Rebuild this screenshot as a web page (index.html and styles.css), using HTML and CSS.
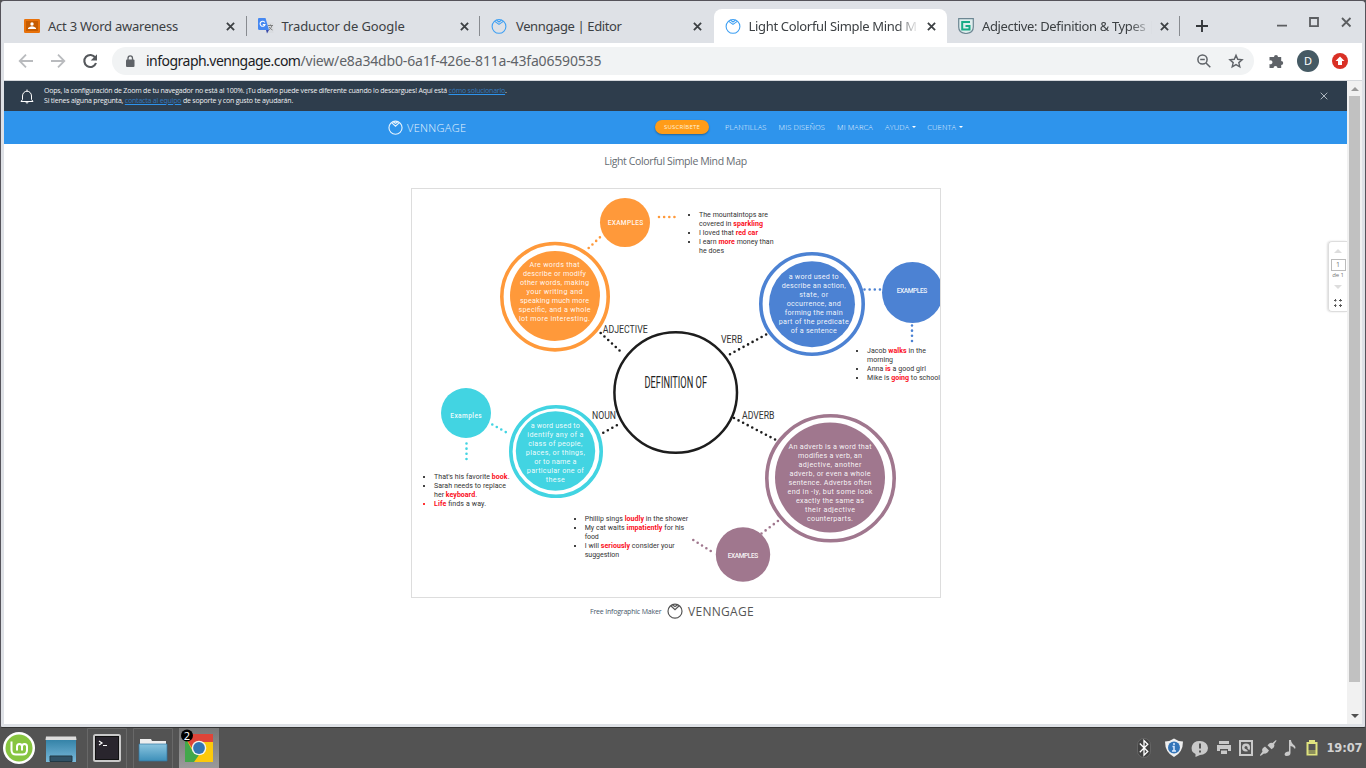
FILE: index.html
```html
<!DOCTYPE html>
<html lang="es">
<head>
<meta charset="utf-8">
<title>Light Colorful Simple Mind Map</title>
<link rel="stylesheet" href="styles.css">
</head>
<body>
<svg width="0" height="0" class="defs">
  <symbol id="x" viewBox="0 0 10 10"><path d="M1 1 9 9M9 1 1 9" stroke="currentColor" stroke-width="2"/></symbol>
  <symbol id="venn" viewBox="0 0 16 16"><g fill="none" stroke="currentColor" stroke-width="1.100"><circle cx="8" cy="8.400" r="6.900"/><path d="M3.400 3.100 8 6.400 12.600 3.100M5.400 2 8 4 10.600 2"/></g></symbol>
  <symbol id="logo" viewBox="0 0 16 16"><g fill="none" stroke="currentColor" stroke-width="1.200"><circle cx="8" cy="8.200" r="7"/><path d="M3.800 2.800 8 6.700 12.200 2.800M5.500 1.900 8 3.500 10.500 1.900"/></g></symbol>
</svg>
<div class="window">
  <header class="tabs">
    <div class="tab"><svg class="fav" viewBox="0 0 16 16"><rect y="1" width="16" height="14" rx="1.3" fill="#e8710a"/><rect x="2" y="3" width="12" height="10" fill="#c65c00"/><circle cx="8" cy="6" r="1.7" fill="#fff"/><path d="M4 11V10q4-3.5 8 0v1z" fill="#fff"/></svg><span class="title t1">Act 3 Word awareness</span><svg class="close"><use href="#x"/></svg></div>
    <div class="tab line"><svg class="fav" viewBox="0 0 16 16"><path d="M6 4.5h9.5V15H9z" fill="#d9dce0"/><path d="M1 0h6.5l3.5 12H1.5Q0 12 0 10.500V1Q0 0 1 0" fill="#4688f1"/><path d="M8 12h3l-2 3.500z" fill="#3749ab"/><path d="M6.800 4.600A2.500 2.500 0 1 0 7 6.500H4.800" fill="none" stroke="#fff" stroke-width="1.100"/><path d="M10 7.500h5M12.500 6.500v1M14 7.500q-.8 3-3.200 4.500M11 9q1.500 2.200 3.500 3" fill="none" stroke="#777" stroke-width=".9"/></svg><span class="title t2">Traductor de Google</span><svg class="close"><use href="#x"/></svg></div>
    <div class="tab line"><svg class="fav blue"><use href="#venn"/></svg><span class="title t3">Venngage | Editor</span><svg class="close"><use href="#x"/></svg></div>
    <div class="tab active"><svg class="fav blue"><use href="#venn"/></svg><span class="title fade t4">Light Colorful Simple Mind M</span><svg class="close"><use href="#x"/></svg></div>
    <div class="tab end"><svg class="fav" viewBox="0 0 16 16"><path d="M.7.700h14.600V9q0 6-7.300 6.500Q.7 15 .7 9z" fill="#dfeeee" stroke="#6d8793" stroke-width="1.200"/><path d="M12 4H4.200v7.500h7.300V8H7.500" fill="none" stroke="#18ab86" stroke-width="2"/></svg><span class="title fade t5">Adjective: Definition &amp; Types |</span><svg class="close"><use href="#x"/></svg></div>
    <svg class="plus" viewBox="0 0 12 12"><path d="M6 0v12M0 6h12" stroke="#34373b" stroke-width="1.900"/></svg>
    <svg class="winbtns" viewBox="1270 10 90 24"><g fill="none" stroke="#5c5e61" stroke-width="1.800"><path d="M1277 25.700h10M1342 18l8.500 8.500M1350.500 18l-8.500 8.500"/><path d="M1310 18h8v8.200h-8z"/></g></svg>
  </header>
  <div class="toolbar">
    <svg class="navicons" viewBox="4 43 108 37"><g fill="none" stroke="#b9bbbe" stroke-width="1.800"><path d="M33 61H20M26 54.700 19.700 61 26 67.300M51 61h13M58 54.700 64.300 61 58 67.300"/><path d="M95.300 57.600A6 6 0 1 0 96 63" stroke="#55585c" stroke-width="2.100"/></g><path d="M97 54.200v6.300h-6.300z" fill="#55585c"/></svg>
    <div class="omnibox">
      <svg class="lock" viewBox="0 0 10 12"><rect x="1" y="4.500" width="8.500" height="7.500" rx="1" fill="#5f6368"/><path d="M3 5V3.200a2.200 2.200 0 0 1 4.500 0V5" fill="none" stroke="#5f6368" stroke-width="1.300"/></svg>
      <span class="host">infograph.venngage.com</span><span class="path">/view/e8a34db0-6a1f-426e-811a-43fa06590535</span>
      <svg class="omniicons" viewBox="1195 50 50 22"><g fill="none" stroke="#5f6368" stroke-width="1.500"><circle cx="1202.500" cy="59.500" r="4.600"/><path d="m1206 63 4.300 4.300M1200.200 59.500h4.600"/><path d="m1236 55.300 1.700 4 4.400.4-3.300 2.900 1 4.300-3.800-2.300-3.800 2.300 1-4.300-3.300-2.900 4.400-.4z" stroke-width="1.400"/></g></svg>
    </div>
    <svg class="exticons" viewBox="1264 43 98 37"><path d="M1270 57h4a2 2 0 1 1 4 0h3.200v4a2 2 0 1 1 0 4V68h-3.700a2 2 0 1 0-4 0H1269.500v-4a2 2 0 1 0 0-3.500V57z" fill="#5f6368"/><circle cx="1308" cy="61" r="11" fill="#455a64"/><text x="1304" y="65" class="avatar">D</text><circle cx="1340" cy="61" r="8" fill="#d93025"/><path d="m1340 56.500 4.500 4.500h-2.500v4h-4v-4h-2.500z" fill="#fff"/></svg>
  </div>
  <div class="viewport">
    <main class="page">
      <div class="notice">
        <svg class="bell" viewBox="0 0 14 16"><path d="M1 12.500h12L11.500 10.500V7a4.500 4.800 0 0 0-9 0v3.500zM5.500 13q1.500 2.500 3 0M7 .500v2" fill="none" stroke="#fff" stroke-width="1"/></svg>
        <div class="message"><div class="m1">Oops, la configuración de Zoom de tu navegador no está al 100%. ¡Tu diseño puede verse diferente cuando lo descargues! Aquí está <a>cómo solucionarlo</a>.</div><div class="m2">Si tienes alguna pregunta, <a>contacta al equipo</a> de soporte y con gusto te ayudarán.</div></div>
        <svg class="dismiss" viewBox="0 0 8 8"><path d="m.7.700 6.600 6.600m0-6.600L.7 7.300" stroke="#aeb7bf" stroke-width="1"/></svg>
      </div>
      <nav class="nav">
        <svg class="brandmark"><use href="#logo"/></svg><span class="brand">VENNGAGE</span>
        <span class="subscribe">SUSCRÍBETE</span>
        <div class="links"><span>PLANTILLAS</span><span>MIS DISEÑOS</span><span>MI MARCA</span><span class="more">AYUDA</span><span class="more">CUENTA</span></div>
      </nav>
      <h1>Light Colorful Simple Mind Map</h1>
      <svg class="map" viewBox="411 188 530 410">
        <rect x="411.500" y="188.500" width="529" height="409" fill="#fff" stroke="#ddd"/>
        <g clip-path="url(#board)">
        <clipPath id="board"><rect x="412" y="189" width="528" height="408"/></clipPath>
        <g class="orange"><ellipse class="ring" cx="555" cy="296.700" rx="53.200" ry="53.200"/><circle class="disc" cx="555" cy="296" r="45"/><ellipse class="disc" cx="625" cy="222.500" rx="25" ry="24.500"/><path class="dots" d="M588.700 248 600.300 237M659 217h16.500"/></g>
        <g class="royal"><ellipse class="ring" cx="812" cy="304" rx="51.200" ry="50.200"/><circle class="disc" cx="812" cy="304.200" r="43"/><circle class="disc" cx="912.500" cy="292.500" r="30.500"/><path class="dots" d="M864.500 289.500H881M912 325.500V342"/></g>
        <g class="teal"><ellipse class="ring" cx="556" cy="451.500" rx="45.200" ry="44.700"/><circle class="disc" cx="555.500" cy="451" r="39.700"/><circle class="disc" cx="466" cy="413" r="25"/><path class="dots" d="M492.300 424.500 507 432.800M466.500 443.500v16.500"/></g>
        <g class="mauve"><ellipse class="ring" cx="830.500" cy="478.300" rx="63.700" ry="62.500"/><circle class="disc" cx="830" cy="477.500" r="55"/><circle class="disc" cx="743" cy="554.500" r="27.200"/><path class="dots" d="M693.300 540 711.500 551.500M761.500 533.500 778 521"/></g>
        <g class="ink"><ellipse class="core" cx="675.700" cy="392.500" rx="61.300" ry="60.300"/><path class="dots" d="M600.700 333 620 351M730 354.300 767 334M603.300 432.700 617.500 424.900M734 418 776 440"/></g>
        <g class="body">
          <g class="mid" transform="translate(554.500 0)"><text y="267" textLength="50">Are words that</text><text y="276" textLength="63">describe or modify</text><text y="285" textLength="69">other words, making</text><text y="294" textLength="56">your writing and</text><text y="303" textLength="69">speaking much more</text><text y="312" textLength="72">specific, and a whole</text><text y="321" textLength="71">lot more interesting.</text></g>
          <g class="mid" transform="translate(813.700 0)"><text y="279" textLength="50">a word used to</text><text y="288" textLength="64">describe an action,</text><text y="297" textLength="29">state, or</text><text y="306" textLength="54">occurrence, and</text><text y="315" textLength="58">forming the main</text><text y="324" textLength="70">part of the predicate</text><text y="333" textLength="46">of a sentence</text></g>
          <g class="mid" transform="translate(555.300 0)"><text y="428.300" textLength="49">a word used to</text><text y="437.300" textLength="56">identify any of a</text><text y="446.300" textLength="54">class of people,</text><text y="455.300" textLength="59">places, or things,</text><text y="464.300" textLength="42">or to name a</text><text y="473.300" textLength="57">particular one of</text><text y="482.300" textLength="19">these</text></g>
          <g class="mid" transform="translate(830 0)"><text y="449" textLength="83">An adverb is a word that</text><text y="458" textLength="64">modifies a verb, an</text><text y="467" textLength="63">adjective, another</text><text y="476" textLength="81">adverb, or even a whole</text><text y="485" textLength="83">sentence. Adverbs often</text><text y="494" textLength="85">end in -ly, but some look</text><text y="503" textLength="68">exactly the same as</text><text y="512" textLength="50">their adjective</text><text y="521" textLength="46">counterparts.</text></g>
          <g class="mid caps"><text x="625.500" y="225" textLength="35.500">EXAMPLES</text><text x="912" y="293" textLength="30.500">EXAMPLES</text><text x="466" y="418" textLength="31.500">Examples</text><text x="743" y="558" textLength="30.500">EXAMPLES</text></g>
        </g>
        <g class="label"><text x="602.700" y="333" textLength="45" lengthAdjust="spacingAndGlyphs">ADJECTIVE</text><text x="721" y="343" textLength="21.500" lengthAdjust="spacingAndGlyphs">VERB</text><text x="592" y="419" textLength="24" lengthAdjust="spacingAndGlyphs">NOUN</text><text x="742" y="419" textLength="32.500" lengthAdjust="spacingAndGlyphs">ADVERB</text><text class="core-title" x="644.500" y="388.300" textLength="62.500" lengthAdjust="spacingAndGlyphs">DEFINITION OF</text></g>
        <g class="list">
          <text x="699" y="217" textLength="69">The mountaintops are</text><text x="699" y="226" textLength="64">covered in <tspan>sparkling</tspan></text><text x="699" y="235" textLength="59">I loved that <tspan>red car</tspan></text><text x="699" y="244" textLength="74.500">I earn <tspan>more</tspan> money than</text><text x="699" y="253" textLength="25">he does</text>
          <text x="867" y="353" textLength="59">Jacob <tspan>walks</tspan> in the</text><text x="867" y="362" textLength="26">morning</text><text x="867" y="371" textLength="59">Anna <tspan>is</tspan> a good girl</text><text x="867" y="380" textLength="73">Mike is <tspan>going</tspan> to school</text>
          <text x="434" y="479" textLength="75.500">That's his favorite <tspan>book</tspan>.</text><text x="434" y="488" textLength="72">Sarah needs to replace</text><text x="434" y="497" textLength="43">her <tspan>keyboard</tspan>.</text><text x="434" y="506" textLength="52"><tspan>Life</tspan> finds a way.</text>
          <text x="584.700" y="521" textLength="103.500">Phillip sings <tspan>loudly</tspan> in the shower</text><text x="584.700" y="530" textLength="99.500">My cat waits <tspan>impatiently</tspan> for his</text><text x="584.700" y="539" textLength="14">food</text><text x="584.700" y="548" textLength="90">I will <tspan>seriously</tspan> consider your</text><text x="584.700" y="557" textLength="34.500">suggestion</text>
          <path class="bullets" d="M688 215h2M688 233h2M688 242h2M856 351h2M856 369h2M856 378h2M423 477h2M423 486h2M574 519h2M574 528h2M574 546h2"/><path class="bullets red" d="M423 504h2"/>
        </g>
        </g>
      </svg>
      <div class="credit"><span>Free Infographic Maker</span><svg><use href="#logo"/></svg><b>VENNGAGE</b></div>
      <aside class="pager"><i class="up"></i><span class="num">1</span><span class="of">de 1</span><i class="down"></i><svg viewBox="0 0 8 8"><path d="M0 1.500h2.500M1.500 0v2.500M5 1.500h3M6.500 0v2.500M0 6.500h2.500M1.500 5.200V8M5 6.500h3M6.500 5.200V8" stroke="#555" stroke-width="1"/></svg></aside>
    </main>
    <div class="scroll"><i class="sup"></i><div class="thumb"></div><i class="sdown"></i></div>
  </div>
</div>
<footer class="taskbar">
  <svg class="launch" viewBox="0 728 230 40">
    <defs><linearGradient id="g1" x2="0" y2="1"><stop stop-color="#3583a8"/><stop offset="1" stop-color="#79b9da"/></linearGradient><linearGradient id="g2" x2="0" y2="1"><stop stop-color="#8bc5df"/><stop offset="1" stop-color="#3d8fb9"/></linearGradient><linearGradient id="g3" x2="0" y2="1"><stop stop-color="#777"/><stop offset="1" stop-color="#9a9a9a"/></linearGradient></defs>
    <circle cx="19" cy="748" r="16" fill="#fff"/><circle cx="19" cy="748" r="13.500" fill="#87c540"/><path d="M11.500 741.500v8.500q0 4.500 4.500 4.500h6.500q4.500 0 4.500-4.500V746.500a2.500 2.500 0 0 0-5 0v4V746.500a2.500 2.500 0 0 0-5 0v4" fill="none" stroke="#fff" stroke-width="2"/>
    <path d="M46 740h30v22H46z" fill="url(#g1)"/><path d="M46 736.500h30l.5 3.500h-31z" fill="#ddd"/><path d="M50 756h22v5.500H50z" fill="#315266" stroke="#223945"/>
    <g fill="none" stroke="#686868"><path d="M87.500 768V728.500h39V768M133.500 768V728.500h39V768"/></g><path d="M179 728h40v40h-40z" fill="url(#g3)"/>
    <rect x="93" y="734" width="28" height="28" rx="2.500" fill="#c9c9c9"/><rect x="95.500" y="736.500" width="23" height="23" fill="#29252d" stroke="#111"/><path d="m99 741 3 2-3 2M103 745.500h4" fill="none" stroke="#fff" stroke-width="1.200"/>
    <path d="M140 739h11l1 2h14v4h-26z" fill="#eee"/><path d="M139 744h28v17h-28z" fill="url(#g2)" stroke="#3177a0" stroke-width=".7"/>
    <path d="M185 734h28v28h-28z" fill="#fcc90b"/><path d="M185 737 192 750l7 5-5 7h-9z" fill="#42a84b"/><path d="M185 734h28v8h-14l-7 6-7-11z" fill="#df4438"/><circle cx="199" cy="748" r="7.300" fill="#f4f4ee"/><circle cx="199" cy="748" r="5.900" fill="#3376b4"/><circle cx="187" cy="735.500" r="6" fill="#000"/><text x="183.800" y="739.500" class="count">2</text>
  </svg>
  <svg class="tray" viewBox="1130 728 236 40">
    <rect x="1137.500" y="738.500" width="13" height="19" rx="6.500" fill="#414141" stroke="#777" stroke-width=".6"/><path d="m1139.800 743.500 8 8-3.800 3.800V740.500l3.800 3.800-8 8" fill="none" stroke="#fff" stroke-width="1.300"/>
    <path d="M1174 738.500q4 3 9 3 0 11-9 15.500-9-4.500-9-15.500 5 0 9-3" fill="#eee"/><circle cx="1174" cy="747.500" r="6" fill="#3475b8"/><path d="M1174 743v2M1172.500 746.500h1.500v4.500M1172 751h4" fill="none" stroke="#d9eaff" stroke-width="1.500"/>
    <g fill="#c9c9c9"><path d="M1200 741a8 7 0 0 1 0 14l-4.500 2v-3a8 7 0 0 1 4.500-13"/><path d="M1219 741h10v3h-10zM1217 745h14v6h-3v-2h-8v2h-3zM1221 750.500h6V754h-6z"/><path d="M1239 740h14v16h-14z"/><path d="m1260 755 2.500-3.500q-1-2 .5-3.500l2-1.500 4 4-1.500 2q-1.500 1.500-3.500 1l-3.500 2.500zM1276 740l-3.500 3q-2-.7-3.500.8l-1.500 1.500 4 4 2-1.500q1.500-2 .5-3.500l2.500-3.500z"/><path d="M1289 740h2q0 3 4 6 1 2 0 3-2-3-4.500-3v7q0 3-4 3-2.800-.5-1.500-3 1.500-2 4-1.500z"/></g>
    <path d="M1200 743.500v5M1200 750.500v2" stroke="#555" stroke-width="2"/><rect x="1241" y="742" width="10" height="12" fill="#555"/><circle cx="1246" cy="747.500" r="4" fill="#c9c9c9"/><circle cx="1246" cy="747.500" r="1.500" fill="#555"/><path d="m1246 748 4 4" stroke="#555" stroke-width="1.500"/>
    <path d="M1309 740h6v2h2.500v13.500h-11V742h2.500z" fill="#dfe37f"/><path d="M1308.500 744h7v6h-7z" fill="#555"/><path d="M1308.500 750h7v4h-7z" fill="#8c8f5b"/>
    <text class="clock" x="1326.500" y="752" textLength="36">19:07</text>
  </svg>
</footer>
</body>
</html>
```
FILE: styles.css
```css
* { box-sizing: border-box; }
body { margin: 0; width: 1366px; height: 768px; overflow: hidden; background: #535353; font-family: "Noto Sans", sans-serif; display: flex; flex-direction: column; }
svg { display: block; flex: none; }
.defs { position: absolute; }
.window { height: 728px; flex: none; background: #dee1e6; border: 1px solid #55535a; border-bottom-color: #333; border-radius: 4px 4px 2px 2px; padding: 0 3px 3px; display: flex; flex-direction: column; }
.tabs { height: 42px; flex: none; display: flex; padding: 8px 0 0 9px; }
.tab { width: 233.5px; flex: none; display: flex; align-items: center; padding: 0 10px 0 11px; position: relative; }
.tab.line::before, .tab.end::after { content: ""; position: absolute; left: -1px; top: 7px; width: 1px; height: 20px; background: #888b90; }
.tab.end::after { left: auto; right: 1px; }
.tab.active { background: #fff; border-radius: 8px 8px 0 0; }
.fav { width: 16px; height: 16px; margin-right: 8px; }
.blue { color: #3fa0f3; }
.title { width: 167px; font-size: 13px; line-height: 20px; color: #3c4043; white-space: nowrap; }
.fade { -webkit-mask-image: linear-gradient(90deg, #000 148px, transparent 170px); mask-image: linear-gradient(90deg, #000 148px, transparent 170px); width: 170px; }
.close { width: 9px; height: 9px; margin-left: 11px; color: #3c4043; }
.fade + .close { margin-left: 8px; }
.t1 { letter-spacing: -.24px; }
.t2 { letter-spacing: -.1px; }
.t3 { letter-spacing: -.38px; padding-left: 1px; }
.t4 { letter-spacing: -.32px; }
.t5 { letter-spacing: -.35px; }
.plus { width: 12px; height: 12px; margin: 11px 0 0 15px; }
.winbtns { width: 90px; height: 24px; margin: 1px 2px 0 auto; }
.toolbar { height: 38px; flex: none; background: #fff; border-bottom: 1px solid #d5d8dc; display: flex; }
.navicons { width: 108px; height: 37px; }
.omnibox { width: 1142px; height: 28px; margin-top: 4px; border-radius: 14px; background: #f1f3f4; display: flex; align-items: center; padding: 0 9px 0 13px; font-size: 14px; white-space: nowrap; }
.lock { width: 10px; height: 12px; margin-right: 11px; }
.host, .path { margin-top: -2px; }
.host { color: #202124; letter-spacing: -.52px; }
.path { color: #5f6368; letter-spacing: -.17px; }
.omniicons { width: 50px; height: 22px; margin-left: auto; }
.exticons { width: 98px; height: 37px; margin-left: 10px; }
.avatar { font-size: 11px; fill: #fff; }
.viewport { flex: 1; display: flex; min-height: 0; }
.page { width: 1343px; background: #fff; position: relative; display: flex; flex-direction: column; align-items: center; }
.notice { width: 100%; height: 30px; flex: none; background: #2e3d4c; display: flex; align-items: center; padding: 0 19px 0 16px; color: #eef1f3; }
.bell { width: 14px; height: 16px; margin: 2px 10px 0 0; }
.message { flex: 1; font: 7px/10px "Open Sans", sans-serif; white-space: nowrap; }
.message a { color: #3578ba; text-decoration: underline; text-decoration-color: #2d93ec; }
.m1 { letter-spacing: -.205px; }
.m2 { letter-spacing: -.2px; }
.dismiss { width: 8px; height: 8px; }
.nav { width: 100%; height: 33px; flex: none; background: #2e94ec; display: flex; align-items: center; padding-left: 384px; color: #e6f3fd; }
.brandmark { width: 15px; height: 15px; margin-right: 4px; }
.brand { font: 300 11px "Open Sans", sans-serif; width: 60px; letter-spacing: .3px; }
.subscribe { margin: -2px 0 0 188px; width: 54px; height: 14px; border-radius: 7px; background: #ff9c18; color: #fff0d8; font: 6px/14px "Open Sans", sans-serif; letter-spacing: .2px; text-align: center; box-shadow: 0 1px 2px #0005; }
.links { display: flex; margin: -1px 0 0 16px; font: 300 7.5px "Open Sans", sans-serif; gap: 12px; letter-spacing: .13px; white-space: nowrap; }
.more::after { content: ""; display: inline-block; border: 2px solid transparent; border-top-color: #fff; border-bottom: 0; margin-left: 3px; vertical-align: 2px; }
.more + .more { margin-left: -1px; }
h1 { margin: 10px 0 0; font: 400 10.5px/14px "Open Sans", sans-serif; color: #666c72; height: 34px; letter-spacing: -.37px; }
.map { width: 530px; height: 410px; }
.ring { fill: none; stroke: currentColor; stroke-width: 3.6; }
.disc { fill: currentColor; }
.dots { fill: none; stroke: currentColor; stroke-width: 2.6; stroke-linecap: round; stroke-dasharray: 0 5.15; }
.core { fill: #fff; stroke: currentColor; stroke-width: 2.5; }
.orange { color: #ff993a; }
.royal { color: #4c82d3; }
.teal { color: #42d4e2; }
.mauve { color: #a0778e; }
.ink { color: #1d1d1d; }
.body { font: 7.2px Roboto, sans-serif; fill: #fff; fill-opacity: .92; }
.caps { font-size: 6.6px; font-weight: 500; }
.mid { text-anchor: middle; }
.label { font: 11px Roboto, sans-serif; fill: #333; }
.core-title { font-size: 16px; fill: #222; }
.list { font: 7px Roboto, sans-serif; fill: #333; }
.list tspan { font-weight: 700; fill: #fb0d22; }
.bullets { stroke: #444; stroke-width: 2; }
.red { stroke: #f33; }
.credit { display: flex; align-items: center; height: 26px; margin-left: -7px; color: #46586a; font: 7px "Open Sans", sans-serif; }
.credit span { width: 71px; letter-spacing: -.2px; white-space: nowrap; }
.credit svg { width: 16px; height: 16px; margin: 0 5px 0 6px; color: #555; }
.credit b { font-weight: 400; font-size: 12px; color: #555; width: 66px; letter-spacing: .3px; }
.pager { position: absolute; right: 0; top: 160px; width: 19px; height: 71px; border: 1px solid #ddd; border-right: 0; border-radius: 4px 0 0 4px; box-shadow: -1px 0 2px #0002; display: flex; flex-direction: column; align-items: center; font: 7px "Open Sans", sans-serif; color: #777; }
.pager i, .scroll i { border: 4px solid transparent; width: 0; height: 0; }
.pager .up { border-top: 0; border-bottom-color: #ddd; margin-top: 7px; }
.num { width: 15px; height: 12px; border: 1px solid #bbb; text-align: center; line-height: 10px; margin-top: 6px; }
.of { line-height: 8px; font-size: 6px; letter-spacing: -.1px; }
.pager .down { border-bottom: 0; border-top-color: #ddd; margin-top: 6px; }
.pager svg { width: 8px; height: 8px; margin-top: 10px; }
.scroll { width: 15px; background: #f1f1f1; display: flex; flex-direction: column; align-items: center; padding: 6px 0 6px; }
.scroll .sup { border-top: 0; border-bottom-color: #999; margin-bottom: 5px; }
.scroll .sdown { border-bottom: 0; border-top-color: #505050; margin-top: auto; }
.thumb { width: 11px; height: 586px; background: #c1c1c1; flex: none; }
.taskbar { height: 40px; display: flex; justify-content: space-between; background: #535353; }
.launch { width: 230px; height: 40px; }
.tray { width: 236px; height: 40px; }
.count { font-size: 11px; fill: #fff; }
.clock { font: 700 11.5px "DejaVu Sans", sans-serif; fill: #d2d2d2; }
```
